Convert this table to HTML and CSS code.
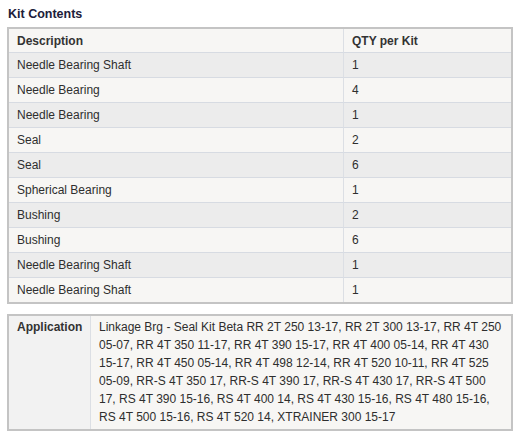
FILE: index.html
```html
<!DOCTYPE html>
<html>
<head>
<meta charset="utf-8">
<link rel="stylesheet" href="styles.css">
</head>
<body>
<div class="page">
  <h2 class="title">Kit Contents</h2>
  <table class="kit">
    <thead>
      <tr><th class="c-desc">Description</th><th class="c-qty">QTY per Kit</th></tr>
    </thead>
    <tbody>
      <tr class="odd"><td class="c-desc">Needle Bearing Shaft</td><td class="c-qty">1</td></tr>
      <tr class="even"><td class="c-desc">Needle Bearing</td><td class="c-qty">4</td></tr>
      <tr class="odd"><td class="c-desc">Needle Bearing</td><td class="c-qty">1</td></tr>
      <tr class="even"><td class="c-desc">Seal</td><td class="c-qty">2</td></tr>
      <tr class="odd"><td class="c-desc">Seal</td><td class="c-qty">6</td></tr>
      <tr class="even"><td class="c-desc">Spherical Bearing</td><td class="c-qty">1</td></tr>
      <tr class="odd"><td class="c-desc">Bushing</td><td class="c-qty">2</td></tr>
      <tr class="even"><td class="c-desc">Bushing</td><td class="c-qty">6</td></tr>
      <tr class="odd"><td class="c-desc">Needle Bearing Shaft</td><td class="c-qty">1</td></tr>
      <tr class="even last"><td class="c-desc">Needle Bearing Shaft</td><td class="c-qty">1</td></tr>
    </tbody>
  </table>
  <table class="app">
    <tr>
      <th class="app-label">Application</th>
      <td class="app-value">Linkage Brg - Seal Kit Beta RR 2T 250 13-17, RR 2T 300 13-17, RR 4T 250 05-07, RR 4T 350 11-17, RR 4T 390 15-17, RR 4T 400 05-14, RR 4T 430 15-17, RR 4T 450 05-14, RR 4T 498 12-14, RR 4T 520 10-11, RR 4T 525 05-09, RR-S 4T 350 17, RR-S 4T 390 17, RR-S 4T 430 17, RR-S 4T 500 17, RS 4T 390 15-16, RS 4T 400 14, RS 4T 430 15-16, RS 4T 480 15-16, RS 4T 500 15-16, RS 4T 520 14, XTRAINER 300 15-17</td>
    </tr>
  </table>
</div>
</body>
</html>
```

FILE: styles.css
```css
html, body {
  margin: 0;
  padding: 0;
  background: #ffffff;
}

.page {
  padding: 6px 9px 0 7px;
  font-family: "Liberation Sans", Arial, sans-serif;
  font-size: 12px;
  color: #333333;
}

.title {
  margin: 0 0 5px 1px;
  font-size: 12.5px;
  line-height: 16px;
  font-weight: bold;
  color: #20203a;
}

.kit, .app {
  width: 506px;
  border: 2px solid #c4c4c4;
  border-collapse: separate;
  border-spacing: 0;
  table-layout: fixed;
}

.kit th, .kit td {
  text-align: left;
  padding: 0 8px;
  border-bottom: 1px solid #d7dbe2;
  vertical-align: middle;
}

.kit th {
  height: 23px;
  font-size: 12px;
  font-weight: bold;
  color: #333333;
  background: #f7f6f4;
}

.kit td {
  height: 24px;
  color: #2e2e2e;
}

.kit .c-desc {
  width: 318px;
  border-right: 1px solid #dcdfe4;
}

.kit .last td {
  border-bottom: none;
}

.odd td {
  background: #ececec;
}

.even td {
  background: #f7f6f4;
}

.app {
  margin-top: 10px;
}

.app-label {
  width: 65px;
  text-align: left;
  vertical-align: top;
  padding: 2px 8px 0 8px;
  line-height: 18px;
  font-weight: bold;
  color: #333333;
  background: #f2f2f2;
  border-right: 1px solid #dcdfe4;
}

.app-value {
  padding: 2px 9px 3px 8px;
  line-height: 18px;
  color: #2e2e2e;
  background: #f7f6f4;
  vertical-align: top;
}
```
